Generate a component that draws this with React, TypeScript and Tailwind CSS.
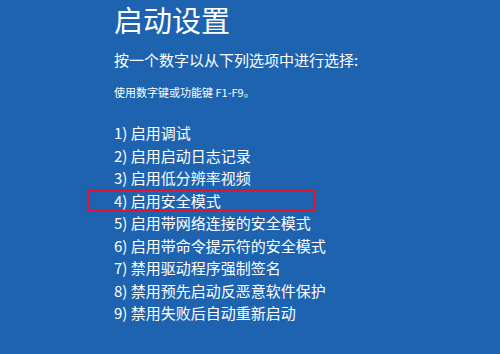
const options = [
  '1) 启用调试',
  '2) 启用启动日志记录',
  '3) 启用低分辨率视频',
  '4) 启用安全模式',
  '5) 启用带网络连接的安全模式',
  '6) 启用带命令提示符的安全模式',
  '7) 禁用驱动程序强制签名',
  '8) 禁用预先启动反恶意软件保护',
  '9) 禁用失败后自动重新启动',
]

export default function App() {
  return (
    <div className="h-[354px] w-[500px] overflow-hidden bg-[#1d63b0] pl-[114px] text-white [font-family:'Noto_Sans_CJK_SC','Noto_Sans',sans-serif]">
      <h1 className="text-[29px] leading-[38px] font-normal">启动设置</h1>
      <p className="mt-[11px] text-[15px] leading-[22px]">按一个数字以从下列选项中进行选择:</p>
      <p className="mt-[13px] text-[11px] leading-[16px]">使用数字键或功能键 F1-F9。</p>

      <ul className="mt-[22px]">
        {options.map((label, i) => (
          <li key={label} className="relative text-[15px] leading-[22.5px]">
            {label}
            {/* 红框标注：安全模式 */}
            {i === 3 && (
              <span className="pointer-events-none absolute left-[-27px] top-[-1px] h-[23px] w-[228px] border-2 border-[#e2142d]" />
            )}
          </li>
        ))}
      </ul>
    </div>
  )
}
